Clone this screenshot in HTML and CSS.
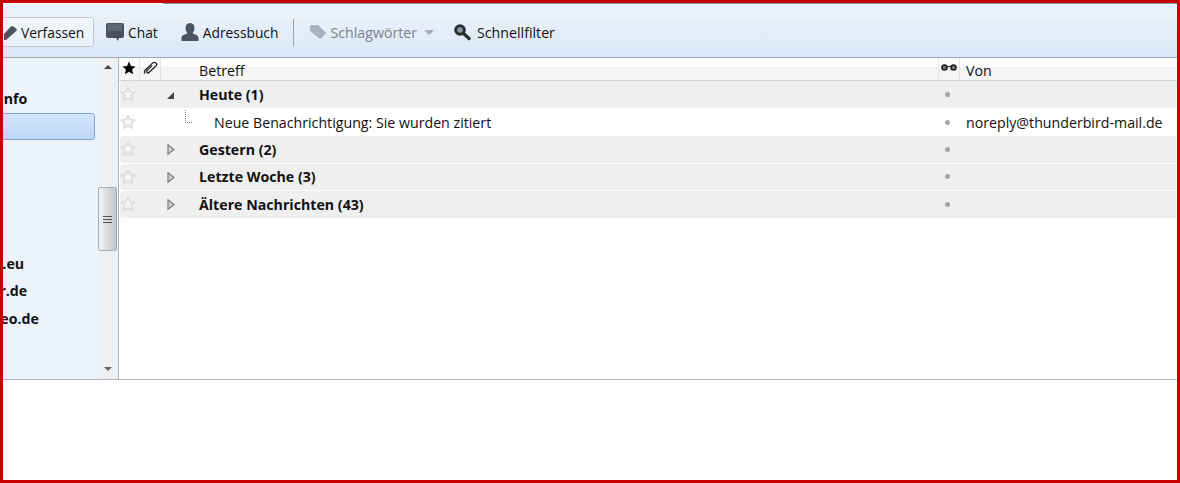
FILE: index.html
```html
<!DOCTYPE html>
<html lang="de">
<head>
<meta charset="utf-8">
<title>Thunderbird</title>
<link rel="stylesheet" href="styles.css">
</head>
<body>
<svg class="defs" width="0" height="0"><defs><symbol id="star" viewBox="0 0 16 16"><path d="M8 1.300l2 4.400 4.800.6-3.600 3.200 1 4.700L8 11.800l-4.200 2.400 1-4.700L1.200 6.300 6 5.700z" fill="#f6f6f6" stroke="#dcdcdc" stroke-width="1.500" stroke-linejoin="round"/></symbol><symbol id="twisty" viewBox="0 0 8 11"><path d="M1 .8 7 5.500 1 10.200z" fill="#cfcfcf" stroke="#7c7c7c" stroke-width="1.200"/></symbol></defs></svg>
<div class="frame">
  <div class="tabline"></div>
  <div class="toolbar">
    <div class="tool compose">
      <svg class="ic-pen" width="14" height="16" viewBox="0 0 14 16"><path d="M-3 16l1-4L7 2.500c.8-.8 1.800-.8 2.500-.1l2.800 2.300c.7.700.6 1.600-.1 2.300L2 16z" fill="#4a5360"/></svg>
      <span>Verfassen</span>
    </div>
    <div class="tool chat">
      <svg width="18" height="19" viewBox="0 0 18 19"><path d="M2 0h14a2 2 0 0 1 2 2v11a2 2 0 0 1-2 2h-3l-1 3-2-3H2a2 2 0 0 1-2-2V2a2 2 0 0 1 2-2z" fill="#48525e"/><path d="M2 1h14v7H1z" fill="#5e6874"/></svg>
      <span>Chat</span>
    </div>
    <div class="tool book">
      <svg width="18" height="18" viewBox="0 0 18 18"><path d="M9 0c3 0 4.500 2.200 4.500 5S12 9.500 11.500 10.500c2.500 1 6 1.500 6 4.500v3H.5v-3c0-3 3.500-3.500 6-4.500C6 9.500 4.500 7.800 4.500 5S6 0 9 0z" fill="#4b5562"/></svg>
      <span>Adressbuch</span>
    </div>
    <div class="sep"></div>
    <div class="tool tags">
      <svg width="16" height="14" viewBox="0 0 16 14"><path d="M0 1.500 1.500 0H8l7.500 7.500a1 1 0 0 1 0 1.400l-4.600 4.600a1 1 0 0 1-1.400 0L0 6z" fill="#a8b2bd"/></svg>
      <span class="wide">Schlagwörter</span>
      <i class="caret"></i>
    </div>
    <div class="tool filter">
      <svg width="17" height="17" viewBox="0 0 17 17"><circle cx="6" cy="6" r="4.300" fill="#8d97a1" stroke="#2a2f36" stroke-width="3"/><path d="M9.500 9.500 15 14.500" stroke="#2a2f36" stroke-width="3.400" stroke-linecap="round"/></svg>
      <span class="wide">Schnellfilter</span>
    </div>
  </div>
  <div class="main">
    <aside class="side">
      <div class="folders">
        <div class="folder"><span class="c1">Info</span></div>
        <div class="folder"><div class="sel"></div></div>
        <div class="folder"></div>
        <div class="folder"></div>
        <div class="folder"></div>
        <div class="folder"></div>
        <div class="folder"><span class="c2">l.eu</span></div>
        <div class="folder"><span class="c3">er.de</span></div>
        <div class="folder"><span class="c4">neo.de</span></div>
      </div>
      <div class="scroll">
        <i class="arrow up"></i>
        <div class="thumb"><b></b><b></b><b></b></div>
        <i class="arrow down"></i>
      </div>
    </aside>
    <section class="tree">
      <div class="row head">
        <div class="hc hstar"><svg width="14" height="14" viewBox="0 0 24 24"><path d="M12 1l3.300 7.500 8 .8-6 5.400 1.700 8L12 18.600 5 22.700l1.700-8-6-5.400 8-.8z" fill="#000"/></svg></div>
        <div class="hc hclip"><svg width="15" height="14" viewBox="0 0 15 14"><path d="M2.500 8.800 9.200 2.400c1.200-1.100 3-1.200 3.900-.4.900.8.800 2.200-.4 3.300L6.200 11.300c-.7.700-1.700.7-2.200.2-.5-.6-.4-1.400.2-2.100l5-4.800M2.500 8.800C1.300 10 1 11.500 2 12.500" fill="none" stroke="#222" stroke-width="1.300"/></svg></div>
        <div class="hc"></div>
        <div class="hc subj">Betreff</div>
        <div class="hc hread"><svg width="16" height="7" viewBox="0 0 16 7"><circle cx="3.500" cy="3.500" r="2.500" fill="#777" stroke="#222" stroke-width="1.600"/><circle cx="12.500" cy="3.500" r="2.500" fill="#777" stroke="#222" stroke-width="1.600"/><path d="M5.500 2.500h5" stroke="#222"/></svg></div>
        <div class="hc from">Von</div>
      </div>
      <div class="row group">
        <div class="star"><svg width="16" height="16"><use href="#star"/></svg></div><div></div>
        <div class="tw"><i class="open"></i></div>
        <div class="subj">Heute (1)</div><div class="dot"></div><div class="from"></div>
      </div>
      <div class="row msg">
        <div class="star"><svg width="16" height="16"><use href="#star"/></svg></div><div></div>
        <div class="tw"><i class="branch"></i></div>
        <div class="subj indent">Neue Benachrichtigung: Sie wurden zitiert</div><div class="dot"></div><div class="from">noreply@thunderbird-mail.de</div>
      </div>
      <div class="row group">
        <div class="star"><svg width="16" height="16"><use href="#star"/></svg></div><div></div>
        <div class="tw"><svg class="closed" width="8" height="11"><use href="#twisty"/></svg></div>
        <div class="subj">Gestern (2)</div><div class="dot"></div><div class="from"></div>
      </div>
      <div class="row group">
        <div class="star"><svg width="16" height="16"><use href="#star"/></svg></div><div></div>
        <div class="tw"><svg class="closed" width="8" height="11"><use href="#twisty"/></svg></div>
        <div class="subj">Letzte Woche (3)</div><div class="dot"></div><div class="from"></div>
      </div>
      <div class="row group">
        <div class="star"><svg width="16" height="16"><use href="#star"/></svg></div><div></div>
        <div class="tw"><svg class="closed" width="8" height="11"><use href="#twisty"/></svg></div>
        <div class="subj">Ältere Nachrichten (43)</div><div class="dot"></div><div class="from"></div>
      </div>
    </section>
  </div>
  <div class="preview"></div>
</div>
</body>
</html>
```
FILE: styles.css
```css
* { box-sizing: border-box; }
html, body { margin: 0; height: 100%; }
body { font-family: "Open Sans", "Noto Sans", sans-serif; font-size: 14.2px; color: #111; overflow: hidden; }
.defs { display: block; height: 0; }
.frame { width: 1180px; height: 483px; border: 3px solid #c70000; background: #fff; display: flex; flex-direction: column; overflow: hidden; }
.tabline { height: 1px; margin-left: 160px; background: #7d90a8; flex: none; }
.toolbar { height: 54px; flex: none; display: flex; align-items: center; font-size: 13.8px; background: linear-gradient(#eef4fb, #d9e7f6); border-bottom: 1px solid #a2a9b1; }
.toolbar svg { flex: none; display: block; }
.wide { font-size: 14.2px; }
.tool { display: flex; align-items: center; white-space: nowrap; }
.compose { margin-left: -20px; width: 111px; height: 30px; margin-top: 3px; padding-left: 20px; gap: 3px; background: linear-gradient(#f3f7fc, #e8f0f9); border: 1px solid #bcc9d8; border-radius: 3px; box-shadow: 0 1px 0 #fff inset; }
.chat { margin-left: 12px; margin-top: 3px; gap: 4px; }
.book { margin-left: 23px; margin-top: 3px; gap: 4px; }
.sep { width: 1px; height: 27px; margin: 3px 0 0 15px; background: #9aa3ad; }
.tags { margin-left: 16px; margin-top: 3px; gap: 4px; color: #7b838c; }
.caret { width: 0; height: 0; border: 5px solid transparent; border-top: 5px solid #a3abb4; border-bottom: 0; margin-left: 3px; }
.filter { margin-left: 20px; margin-top: 3px; gap: 6px; }
.main { height: 322px; flex: none; display: flex; border-bottom: 1px solid #b2b9c6; }
.side { width: 116px; flex: none; display: flex; border-right: 1px solid #a9b7c6; }
.folders { width: 95px; flex: none; background: #edf3fb; padding-top: 26.4px; overflow: hidden; }
.folder { height: 27.5px; display: flex; align-items: center; font-weight: 700; white-space: nowrap; }
.sel { width: 96px; margin: 2px 0 0 -4px; height: 27px; flex: none; background: linear-gradient(#d3e5fb, #bcd6f7); border: 1px solid #7fa6d6; border-radius: 3px; }
.c1 { margin-left: -4px; }
.c2 { margin-left: -5px; }
.c3 { margin-left: -12px; }
.c4 { margin-left: -12px; }
.scroll { flex: 1; background: #eef0f2; display: flex; flex-direction: column; align-items: center; padding: 7px 1px 0 0; }
.arrow { width: 0; height: 0; border: 4.500px solid transparent; flex: none; }
.up { border-bottom: 4.500px solid #444; border-top: 0; }
.down { border-top: 4.500px solid #666; border-bottom: 0; margin-top: 116px; }
.thumb { width: 19px; height: 64px; margin-top: 118px; flex: none; border: 1px solid #a6adb5; border-radius: 2px; background: linear-gradient(90deg, #f2f3f4, #dfe0e2 40%, #c6c8cb); display: flex; flex-direction: column; align-items: center; justify-content: center; gap: 2px; }
.thumb b { width: 9px; height: 1px; background: #555; }
.tree { flex: 1; min-width: 0; }
.row { display: grid; grid-template-columns: 21px 21px 36px 741px 22px 1fr; align-items: center; white-space: nowrap; }
.head { height: 23px; background: linear-gradient(#fff 40%, #f2f3f5 41%, #f6f7f8); border-bottom: 1px solid #d6d9dc; }
.hc { height: 100%; display: flex; align-items: center; }
.hstar, .hclip { justify-content: center; border-right: 1px solid #e4e6e8; }
.hread { justify-content: center; border-left: 1px solid #e4e6e8; border-right: 1px solid #e4e6e8; padding-bottom: 4px; }
.hstar { padding-bottom: 2px; }
.hclip { padding-bottom: 2px; }
.head .subj, .head .from { padding-top: 2px; }
.subj { padding-left: 2px; }
.from { padding-left: 6px; }
.group { height: 27.5px; margin-left: 1px; grid-template-columns: 20px 21px 36px 741px 22px 1fr; background: #efefef; border-bottom: 1px solid #fff; border-radius: 4px 0 0 4px; font-weight: 700; }
.msg { height: 27.5px; margin-left: 1px; grid-template-columns: 20px 21px 36px 741px 22px 1fr; }
.indent { padding-left: 17px; }
.star { display: flex; justify-content: center; margin-right: 4px; }
.dot { width: 5px; height: 5px; border-radius: 50%; background: #a5a5a5; justify-self: center; margin-right: 3px; }
.tw { position: relative; height: 100%; }
.open { position: absolute; left: 6px; top: 11px; width: 0; height: 0; border-style: solid; border-width: 0 0 7px 7px; border-color: transparent transparent #444 transparent; }
.closed { position: absolute; left: 6px; top: 8px; }
.branch { position: absolute; left: 24px; top: 1px; width: 7px; height: 13px; border-left: 1px dotted #888; border-bottom: 1px dotted #888; }
.preview { flex: 1; background: #fff; }
```
